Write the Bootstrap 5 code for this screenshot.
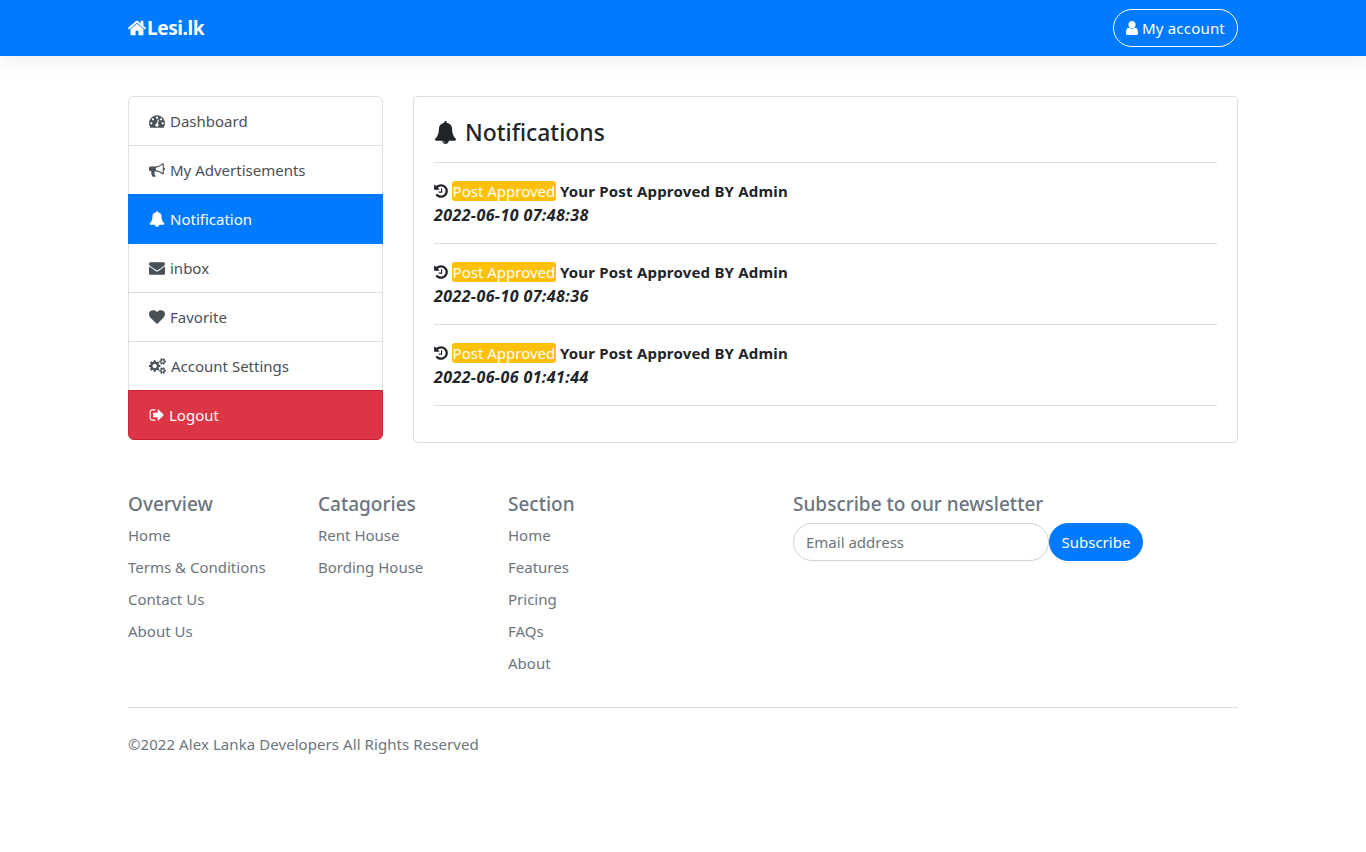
<!DOCTYPE html>
<html lang="en">
<head>
  <meta charset="UTF-8">
  <title>Lesi.lk</title>
  <link rel="stylesheet" href="https://cdn.jsdelivr.net/npm/bootstrap@5.3.3/dist/css/bootstrap.min.css">
  <style>
    body { font-family: "Noto Sans", "Open Sans", sans-serif; font-size: 15px; color: #212529; }
    .wrap { max-width: 1140px; margin: 0 auto; padding: 0 15px; }
    .wrap .row { --bs-gutter-x: 30px; }
    .page-body { margin-top: 40px; }
    .ico { width: 1em; height: 1em; fill: currentColor; vertical-align: -0.125em; }

    .topbar { background: #007bff; height: 56px; box-shadow: 0 8px 16px rgba(0,0,0,.05); }
    .brand { color: #fff; font-size: 19px; font-weight: 700; text-decoration: none; letter-spacing: -.4px; }
    .brand .ico { width: 20px; height: 20px; margin-left: -1px; vertical-align: -3px; }
    .acct-btn { color: #fff; border: 1px solid #fff; border-radius: 19px; height: 38px; padding: 0 12px; font-size: 15px; letter-spacing: .2px; display: flex; align-items: center; gap: 4px; }
    .acct-btn:hover { color: #fff; }
    .acct-btn .ico { width: 12px; height: 14.4px; }

    .side-menu .list-group-item { height: 49px; padding: 0 20px; display: flex; align-items: center; gap: 5px; color: #495057; border-color: #dfdfdf; font-size: 15px; }
    .side-menu .list-group-item:first-child { height: 50px; }
    .side-menu .list-group-item.active { background: #007bff; border-color: #007bff; color: #fff; height: 50px; }
    .side-menu .list-group-item.logout { background: #dc3545; border-color: #c82333; border-top-width: 1px; margin-top: -1px; color: #fff; height: 50px; }
    .side-menu .ico { width: 16px; height: 16px; flex: none; }
    .side-menu .ico-cogs { width: 17px; }
    .side-menu .ico-out { width: 15px; }

    .notes-card { border: 1px solid #dfdfdf; border-radius: 4px; padding: 20px 20px 36px; height: 347px; }
    .notes-title { font-size: 22.9px; font-weight: 500; height: 31px; margin: 0; padding-bottom: 14px; border-bottom: 1px solid #dfdfdf; display: flex; align-items: center; gap: 8px; box-sizing: content-box; }
    .notes-title .ico { width: 23px; height: 23px; }
    .note-row { height: 81px; border-bottom: 1px solid #dfdfdf; padding-top: 16px; font-weight: 700; font-size: 15px; letter-spacing: .2px; line-height: 24px; }
    .note-row .ico { width: 16px; height: 16px; margin: 0 -1px; vertical-align: -2px; }
    .tag-approved { background: #ffc107; color: #fff; font-weight: 400; letter-spacing: 0; border-radius: 3px; padding: 0 .5px; }
    .note-date { font-style: italic; font-size: 16px; letter-spacing: .4px; }

    .foot { margin-top: 49px; color: #6c757d; }
    .foot h5 { font-size: 19px; font-weight: 500; margin: 0 0 7px; line-height: 24px; }
    .foot-links { list-style: none; padding: 0; margin: 0; }
    .foot-links li { height: 32px; line-height: 24px; font-size: 15px; }
    .foot-links a { color: #6c757d; text-decoration: none; }
    .mail-box { width: 256px; height: 38px; border-radius: 19px; border: 1px solid #ced4da; padding: 6px 12px; font-size: 15px; }
    .mail-box::placeholder { color: #6c757d; }
    .sub-btn { background: #007bff; border-color: #007bff; color: #fff; border-radius: 19px; height: 38px; font-size: 15px; padding: 0 11.5px; }
    .foot-bottom { border-top: 1px solid #dfdfdf; margin-top: 24px; padding-top: 24px; line-height: 24px; font-size: 15px; letter-spacing: .07px; }
  </style>
</head>
<body>
  <svg width="0" height="0" class="position-absolute">
    <symbol id="i-home" viewBox="0 0 1792 1792"><path d="M1472 992v480q0 26-19 45t-45 19h-384v-384h-256v384h-384q-26 0-45-19t-19-45v-480q0-1 .5-3t.5-3l575-474 575 474q1 2 1 6zm223-69l-62 74q-8 9-21 11h-3q-13 0-21-7l-692-577-692 577q-12 8-24 7-13-2-21-11l-62-74q-8-10-7-23.5t11-21.5l719-599q32-26 76-26t76 26l244 204v-195q0-14 9-23t23-9h192q14 0 23 9t9 23v408l219 182q10 8 11 21.5t-7 23.5z"/></symbol>
    <symbol id="i-user" viewBox="256 128 1280 1536"><path d="M1536 1399q0 109-62.5 187t-150.5 78h-854q-88 0-150.5-78t-62.5-187q0-85 8.5-160.5t31.5-152 58.5-131 94-89 134.5-34.5q131 128 313 128t313-128q76 0 134.5 34.5t94 89 58.5 131 31.5 152 8.5 160.5zm-256-887q0 159-112.5 271.5t-271.5 112.5-271.5-112.5-112.5-271.5 112.5-271.5 271.5-112.5 271.5 112.5 112.5 271.5z"/></symbol>
    <symbol id="i-gauge" viewBox="0 0 1792 1792"><path d="M384 1152q0-53-37.5-90.5t-90.5-37.5-90.5 37.5-37.5 90.5 37.5 90.5 90.5 37.5 90.5-37.5 37.5-90.5zm192-448q0-53-37.5-90.5t-90.5-37.5-90.5 37.5-37.5 90.5 37.5 90.5 90.5 37.5 90.5-37.5 37.5-90.5zm428 481l101-382q6-26-7.5-48.5t-38.5-29.5-48 6.5-30 39.5l-101 382q-60 5-107 43.5t-63 98.5q-20 77 20 146t117 89 146-20 89-117q16-60-6-117t-72-91zm660-33q0-53-37.5-90.5t-90.5-37.5-90.5 37.5-37.5 90.5 37.5 90.5 90.5 37.5 90.5-37.5 37.5-90.5zm-640-640q0-53-37.5-90.5t-90.5-37.5-90.5 37.5-37.5 90.5 37.5 90.5 90.5 37.5 90.5-37.5 37.5-90.5zm448 192q0-53-37.5-90.5t-90.5-37.5-90.5 37.5-37.5 90.5 37.5 90.5 90.5 37.5 90.5-37.5 37.5-90.5zm320 448q0 261-141 483-19 29-54 29h-1402q-35 0-54-29-141-221-141-483 0-182 71-348t191-286 286-191 348-71 348 71 286 191 191 286 71 348z"/></symbol>
    <symbol id="i-horn" viewBox="0 0 1792 1792"><path d="M1664 640q53 0 90.5 37.5t37.5 90.5-37.5 90.5-90.5 37.5v384q0 52-38 90t-90 38q-417-347-812-380-58 19-91 66t-31 100.5 40 92.5q-20 33-23 65.5t6 58 33.5 55 48 50 61.5 50.5q-29 58-111.5 83t-168.5 11.5-132-55.5q-7-23-29.5-87.5t-32-94.5-23-89-15-101 3.5-98.5 22-110.5h-122q-66 0-113-47t-47-113v-192q0-66 47-113t113-47h480q435 0 896-384 52 0 90 38t38 90v384zm-128 604v-954q-394 302-768 343v270q377 42 768 341z"/></symbol>
    <symbol id="i-bell" viewBox="0 0 1792 1792"><path d="M912 1696q0-16-16-16-59 0-101.5-42.5t-42.5-101.5q0-16-16-16t-16 16q0 73 51.5 124.5t124.5 51.5q16 0 16-16zm816-288q0 52-38 90t-90 38h-448q0 106-75 181t-181 75-181-75-75-181h-448q-52 0-90-38t-38-90q50-42 91-88t85-119.5 74.5-158.5 50-206 19.5-260q0-152 117-282.5t307-158.5q-8-19-8-39 0-40 28-68t68-28 68 28 28 68q0 20-8 39 190 28 307 158.5t117 282.5q0 139 19.5 260t50 206 74.5 158.5 85 119.5 91 88z"/></symbol>
    <symbol id="i-mail" viewBox="0 0 1792 1792"><path d="M1792 710v794q0 66-47 113t-113 47h-1472q-66 0-113-47t-47-113v-794q44 49 101 87 362 246 497 345 57 42 92.5 65.5t94.5 48 110 24.5h2q51 0 110-24.5t94.5-48 92.5-65.5q170-123 498-345 57-39 100-87zm0-294q0 79-49 151t-122 123q-376 261-468 325-10 7-42.5 30.5t-54 38-52 32.5-57.5 27-50 9h-2q-23 0-50-9t-57.5-27-52-32.5-54-38-42.5-30.5q-91-64-262-182.5t-205-142.5q-62-42-117-115.5t-55-136.5q0-78 41.5-130t118.5-52h1472q65 0 112.5 47t47.5 113z"/></symbol>
    <symbol id="i-heart" viewBox="0 0 1792 1792"><path d="M896 1664q-26 0-44-18l-624-602q-10-8-27.5-26t-55.5-65.5-68-97.5-53.5-121-23.5-138q0-220 127-344t351-124q62 0 126.5 21.5t120 58 95.5 68.5 76 68q36-36 76-68t95.5-68.5 120-58 126.5-21.5q224 0 351 124t127 344q0 221-229 450l-623 600q-18 18-44 18z"/></symbol>
    <symbol id="i-cogs" viewBox="0 0 1920 1792"><path d="M896 896q0-106-75-181t-181-75-181 75-75 181 75 181 181 75 181-75 75-181zm768 512q0-52-38-90t-90-38-90 38-38 90q0 53 37.5 90.5t90.5 37.5 90.5-37.5 37.5-90.5zm0-1024q0-52-38-90t-90-38-90 38-38 90q0 53 37.5 90.5t90.5 37.5 90.5-37.5 37.5-90.5zm-384 421v185q0 10-7 19.5t-16 10.5l-155 24q-11 35-32 76 34 48 90 115 7 11 7 20 0 12-7 19-23 30-82.5 89.5t-78.5 59.5q-11 0-21-7l-115-90q-37 19-77 31-11 108-23 155-7 24-30 24h-186q-11 0-20-7.5t-10-17.5l-23-153q-34-10-75-31l-118 89q-7 7-20 7-11 0-21-8-144-133-144-160 0-9 7-19 10-14 41-53t47-61q-23-44-35-82l-152-24q-10-1-17-9.5t-7-19.5v-185q0-10 7-19.5t16-10.5l155-24q11-35 32-76-34-48-90-115-7-11-7-20 0-12 7-20 22-30 82-89t79-59q11 0 21 7l115 90q34-18 77-32 11-108 23-154 7-24 30-24h186q11 0 20 7.5t10 17.5l23 153q34 10 75 31l118-89q8-7 20-7 11 0 21 8 144 133 144 160 0 8-7 19-12 16-42 54t-45 60q23 48 34 82l152 23q10 2 17 10.5t7 19.5zm640 533v140q0 16-149 31-12 27-30 52 51 113 51 138 0 4-4 7-122 71-124 71-8 0-46-47t-52-68q-20 2-30 2t-30-2q-14 21-52 68t-46 47q-2 0-124-71-4-3-4-7 0-25 51-138-18-25-30-52-149-15-149-31v-140q0-16 149-31 13-29 30-52-51-113-51-138 0-4 4-7 4-2 35-20t59-34 30-16q8 0 46 46.5t52 67.5q20-2 30-2t30 2q51-71 92-112l6-2q4 0 124 70 4 3 4 7 0 25-51 138 17 23 30 52 149 15 149 31zm0-1024v140q0 16-149 31-12 27-30 52 51 113 51 138 0 4-4 7-122 71-124 71-8 0-46-47t-52-68q-20 2-30 2t-30-2q-14 21-52 68t-46 47q-2 0-124-71-4-3-4-7 0-25 51-138-18-25-30-52-149-15-149-31v-140q0-16 149-31 13-29 30-52-51-113-51-138 0-4 4-7 4-2 35-20t59-34 30-16q8 0 46 46.5t52 67.5q20-2 30-2t30 2q51-71 92-112l6-2q4 0 124 70 4 3 4 7 0 25-51 138 17 23 30 52 149 15 149 31z"/></symbol>
    <symbol id="i-out" viewBox="0 0 1664 1792"><path d="M704 1440q0 4 1 20t.5 26.5-3 23.5-10 19.5-20.5 6.5h-320q-119 0-203.5-84.5t-84.5-203.5v-704q0-119 84.5-203.5t203.5-84.5h320q13 0 22.5 9.5t9.5 22.5q0 4 1 20t.5 26.5-3 23.5-10 19.5-20.5 6.5h-320q-66 0-113 47t-47 113v704q0 66 47 113t113 47h312l11.5 1 11.5 3 8 5.5 7 9 2 13.5zm928-544q0 26-19 45l-544 544q-19 19-45 19t-45-19-19-45v-288h-448q-26 0-45-19t-19-45v-384q0-26 19-45t45-19h448v-288q0-26 19-45t45-19 45 19l544 544q19 19 19 45z"/></symbol>
    <symbol id="i-hist" viewBox="0 0 1792 1792"><path d="M1664 896q0 156-61 298t-164 245-245 164-298 61q-172 0-327-72.5t-264-204.5q-7-10-6.5-22.5t8.5-20.5l137-138q10-9 25-9 16 2 23 12 73 95 179 147t225 52q104 0 198.5-40.5t163.5-109.5 109.5-163.5 40.5-198.5-40.5-198.5-109.5-163.5-163.5-109.5-198.5-40.5q-98 0-188 35.5t-160 101.5l137 138q31 30 14 69-17 40-59 40h-448q-26 0-45-19t-19-45v-448q0-42 40-59 39-17 69 14l130 129q107-101 244.5-156.5t284.5-55.5q156 0 298 61t245 164 164 245 61 298zm-640-288v448q0 14-9 23t-23 9h-320q-14 0-23-9t-9-23v-64q0-14 9-23t23-9h224v-352q0-14 9-23t23-9h64q14 0 23 9t9 23z"/></symbol>
  </svg>

  <!-- navbar -->
  <nav class="topbar">
    <div class="wrap h-100 d-flex justify-content-between align-items-center">
      <a class="brand" href="#"><svg class="ico"><use href="#i-home"/></svg>Lesi.lk</a>
      <a class="btn acct-btn" href="#"><svg class="ico"><use href="#i-user"/></svg>My account</a>
    </div>
  </nav>

  <div class="wrap page-body">
    <div class="row">
      <div class="col-3">
        <div class="list-group side-menu">
          <a href="#" class="list-group-item list-group-item-action"><svg class="ico"><use href="#i-gauge"/></svg>Dashboard</a>
          <a href="#" class="list-group-item list-group-item-action"><svg class="ico"><use href="#i-horn"/></svg>My Advertisements</a>
          <a href="#" class="list-group-item list-group-item-action active"><svg class="ico"><use href="#i-bell"/></svg>Notification</a>
          <a href="#" class="list-group-item list-group-item-action"><svg class="ico"><use href="#i-mail"/></svg>inbox</a>
          <a href="#" class="list-group-item list-group-item-action"><svg class="ico"><use href="#i-heart"/></svg>Favorite</a>
          <a href="#" class="list-group-item list-group-item-action"><svg class="ico ico-cogs"><use href="#i-cogs"/></svg>Account Settings</a>
          <a href="#" class="list-group-item logout"><svg class="ico ico-out"><use href="#i-out"/></svg>Logout</a>
        </div>
      </div>
      <div class="col-9">
        <div class="notes-card">
          <h4 class="notes-title"><svg class="ico"><use href="#i-bell"/></svg>Notifications</h4>
          <div class="note-row">
            <svg class="ico"><use href="#i-hist"/></svg> <span class="tag-approved">Post Approved</span> Your Post Approved BY Admin
            <div class="note-date">2022-06-10 07:48:38</div>
          </div>
          <div class="note-row">
            <svg class="ico"><use href="#i-hist"/></svg> <span class="tag-approved">Post Approved</span> Your Post Approved BY Admin
            <div class="note-date">2022-06-10 07:48:36</div>
          </div>
          <div class="note-row">
            <svg class="ico"><use href="#i-hist"/></svg> <span class="tag-approved">Post Approved</span> Your Post Approved BY Admin
            <div class="note-date">2022-06-06 01:41:44</div>
          </div>
        </div>
      </div>
    </div>

    <!-- footer -->
    <footer class="foot">
      <div class="row">
        <div class="col-2">
          <h5>Overview</h5>
          <ul class="foot-links">
            <li><a href="#">Home</a></li>
            <li><a href="#">Terms &amp; Conditions</a></li>
            <li><a href="#">Contact Us</a></li>
            <li><a href="#">About Us</a></li>
          </ul>
        </div>
        <div class="col-2">
          <h5>Catagories</h5>
          <ul class="foot-links">
            <li><a href="#">Rent House</a></li>
            <li><a href="#">Bording House</a></li>
          </ul>
        </div>
        <div class="col-2">
          <h5>Section</h5>
          <ul class="foot-links">
            <li><a href="#">Home</a></li>
            <li><a href="#">Features</a></li>
            <li><a href="#">Pricing</a></li>
            <li><a href="#">FAQs</a></li>
            <li><a href="#">About</a></li>
          </ul>
        </div>
        <div class="col-5 offset-1">
          <h5>Subscribe to our newsletter</h5>
          <div class="d-flex">
            <input class="form-control mail-box" type="text" placeholder="Email address">
            <button class="btn sub-btn" type="button">Subscribe</button>
          </div>
        </div>
      </div>
      <div class="foot-bottom">©2022 Alex Lanka Developers All Rights Reserved</div>
    </footer>
  </div>

  <script src="https://cdn.jsdelivr.net/npm/bootstrap@5.3.3/dist/js/bootstrap.bundle.min.js"></script>
</body>
</html>
